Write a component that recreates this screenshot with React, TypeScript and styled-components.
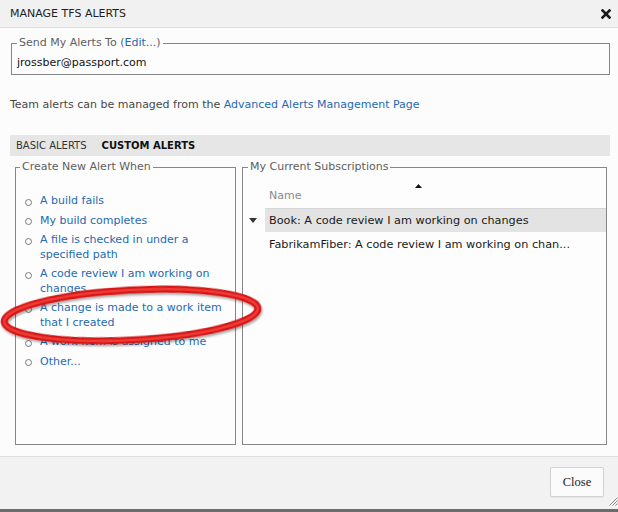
import React from "react";
import styled, { createGlobalStyle } from "styled-components";

const GlobalStyle = createGlobalStyle`
  html, body { margin: 0; padding: 0; background: #fff; }
  body {
    font-family: "DejaVu Sans", Verdana, sans-serif;
    font-size: 11px;
    color: #222;
  }
  * { box-sizing: border-box; }
`;

const Dialog = styled.div`
  position: relative;
  width: 618px;
  height: 512px;
  display: flex;
  flex-direction: column;
  background: #fcfcfc;
  border-bottom: 3px solid #6b6b6b;
  overflow: hidden;
`;

const TitleBar = styled.div`
  height: 28px;
  flex: none;
  display: flex;
  align-items: center;
  justify-content: space-between;
  padding: 0 7px 0 10px;
  background: #f1f1f1;
  border-bottom: 1px solid #dcdcdc;
  color: #1e1e1e;
  font-size: 11px;
`;

const CloseX = styled.svg`
  width: 10px;
  height: 10px;
  display: block;
`;

const Content = styled.div`
  flex: 1;
  min-height: 0;
  display: flex;
  flex-direction: column;
  padding: 8px 8px 11px 10px;
`;

const GroupBox = styled.fieldset<{ $pad: string; $mx: string }>`
  margin: ${(p) => p.$mx};
  padding: ${(p) => p.$pad};
  border: 1px solid #868686;
  min-width: 0;
  background: #fdfdfd;
`;

const Legend = styled.legend`
  padding: 0 2px;
  margin-left: 0;
  color: #5e5e5e;
  font-size: 11px;
  line-height: 14px;
`;

const Link = styled.a`
  color: #1f69b1;
  text-decoration: none;
  cursor: pointer;
`;

const Email = styled.div`
  line-height: 14px;
  color: #111;
  padding-top: 1px;
`;

const Note = styled.div`
  margin-top: 23px;
  line-height: 14px;
  color: #474747;
`;

const TabBar = styled.div`
  margin-top: 23px;
  height: 21px;
  flex: none;
  display: flex;
  align-items: center;
  gap: 15px;
  padding-left: 6px;
  background: #e6e6e6;
  font-size: 10px;
`;

const Tab = styled.span<{ $active?: boolean }>`
  color: ${(p) => (p.$active ? "#111" : "#333")};
  font-weight: ${(p) => (p.$active ? 700 : 400)};
`;

const Panels = styled.div`
  flex: 1;
  min-height: 0;
  margin: 4px 3px 0 5px;
  display: grid;
  grid-template-columns: 221px 1fr;
  gap: 6px;
`;

const AlertList = styled.ul`
  list-style: none;
  margin: 0;
  padding: 0;
  display: flex;
  flex-direction: column;
  gap: 5px;
`;

const AlertItem = styled.li`
  position: relative;
  padding-left: 20px;
  line-height: 14.5px;
  &::before {
    content: "";
    position: absolute;
    left: 5px;
    top: 4.5px;
    width: 5px;
    height: 5px;
    border: 1px solid #7a7a7a;
    border-radius: 50%;
  }
`;

const SubGrid = styled.div`
  display: grid;
  grid-template-columns: 17px 1fr;
`;

const HeaderCell = styled.div`
  grid-column: 2;
  display: flex;
  flex-direction: column;
  padding-top: 9px;
  margin-bottom: 5px;
`;

const SortArrow = styled.svg`
  display: block;
  width: 7px;
  height: 6px;
  margin-left: 150px;
`;

const HeaderText = styled.div`
  padding-left: 4px;
  line-height: 14px;
  color: #8a8a8a;
`;

const Expander = styled.div`
  height: 24px;
  display: flex;
  align-items: center;
  padding-left: 1px;
`;

const Row = styled.div<{ $selected?: boolean }>`
  height: 24px;
  display: flex;
  align-items: center;
  padding-left: 4px;
  white-space: nowrap;
  overflow: hidden;
  color: #1a1a1a;
  font-size: 11.25px;
  background: ${(p) => (p.$selected ? "#e3e3e3" : "transparent")};
  border-top: 1px solid ${(p) => (p.$selected ? "#d6d6d6" : "transparent")};
`;

const Footer = styled.div`
  height: 53px;
  flex: none;
  display: flex;
  justify-content: flex-end;
  align-items: flex-start;
  padding: 10px 14px 0 0;
  background: #f2f2f2;
  border-top: 1px solid #dedede;
`;

const Button = styled.button`
  width: 54px;
  height: 30px;
  padding: 0;
  border: 1px solid #d2d2d2;
  border-radius: 2px;
  background: #fbfbfb;
  box-shadow: 0 1px 1px rgba(0, 0, 0, 0.06);
  font-family: "Liberation Serif", "Times New Roman", serif;
  font-size: 12.5px;
  color: #222;
`;

const Grip = styled.svg`
  position: absolute;
  right: 0;
  bottom: 3px;
  width: 10px;
  height: 10px;
`;

const Annotation = styled.svg`
  position: absolute;
  left: 0;
  top: 0;
  width: 618px;
  height: 512px;
  pointer-events: none;
  overflow: visible;
`;

const alerts = [
  "A build fails",
  "My build completes",
  "A file is checked in under a specified path",
  "A code review I am working on changes",
  "A change is made to a work item that I created",
  "A work item is assigned to me",
  "Other...",
];

export default function App() {
  return (
    <>
      <GlobalStyle />
      <Dialog>
        <TitleBar>
          <span>MANAGE TFS ALERTS</span>
          <CloseX viewBox="0 0 10 10">
            <path d="M1.5 1.5 L8.5 8.5 M8.5 1.5 L1.5 8.5" stroke="#1a1a1a" strokeWidth="2.6" strokeLinecap="square" />
          </CloseX>
        </TitleBar>
        <Content>
          <GroupBox $mx="0 0 0 1px" $pad="5px 5px 4px 5px">
            <Legend>
              Send My Alerts To (<Link>Edit...</Link>)
            </Legend>
            <Email>jrossber@passport.com</Email>
          </GroupBox>
          <Note>
            Team alerts can be managed from the <Link>Advanced Alerts Management Page</Link>
          </Note>
          <TabBar>
            <Tab>BASIC ALERTS</Tab>
            <Tab $active>CUSTOM ALERTS</Tab>
          </TabBar>
          <Panels>
            <GroupBox $mx="0" $pad="20px 4px 0 4px">
              <Legend>Create New Alert When</Legend>
              <AlertList>
                {alerts.map((a) => (
                  <AlertItem key={a}>
                    <Link>{a}</Link>
                  </AlertItem>
                ))}
              </AlertList>
            </GroupBox>
            <GroupBox $mx="0" $pad="0 0 0 5px">
              <Legend>My Current Subscriptions</Legend>
              <SubGrid>
                <HeaderCell>
                  <SortArrow viewBox="0 0 7 6">
                    <path d="M0 5 L3.5 1 L7 5 Z" fill="#111" />
                  </SortArrow>
                  <HeaderText>Name</HeaderText>
                </HeaderCell>
                <Expander>
                  <svg width="8" height="5" viewBox="0 0 8 5">
                    <path d="M0 0 L8 0 L4 5 Z" fill="#333" />
                  </svg>
                </Expander>
                <Row $selected>Book: A code review I am working on changes</Row>
                <Expander />
                <Row>FabrikamFiber: A code review I am working on chan...</Row>
              </SubGrid>
            </GroupBox>
          </Panels>
        </Content>
        <Footer>
          <Button>Close</Button>
        </Footer>
        <Grip viewBox="0 0 10 10">
          <path d="M9.5 1.5 L1.5 9.5 M9.5 4.5 L4.5 9.5 M9.5 7.5 L7.5 9.5" stroke="#8a8a8a" strokeWidth="1" />
        </Grip>
        <Annotation viewBox="0 0 618 512">
          <defs>
            <filter id="shadow" x="-10%" y="-30%" width="120%" height="160%">
              <feDropShadow dx="1" dy="2" stdDeviation="1.2" floodColor="#000" floodOpacity="0.35" />
            </filter>
          </defs>
          <g transform="rotate(-3 131 315)" filter="url(#shadow)">
            <ellipse cx="131" cy="315" rx="127" ry="25" fill="none" stroke="#d31515" strokeWidth="7" />
            <ellipse cx="131" cy="315" rx="127" ry="25" fill="none" stroke="#f23a35" strokeWidth="2.5" />
          </g>
        </Annotation>
      </Dialog>
    </>
  );
}
